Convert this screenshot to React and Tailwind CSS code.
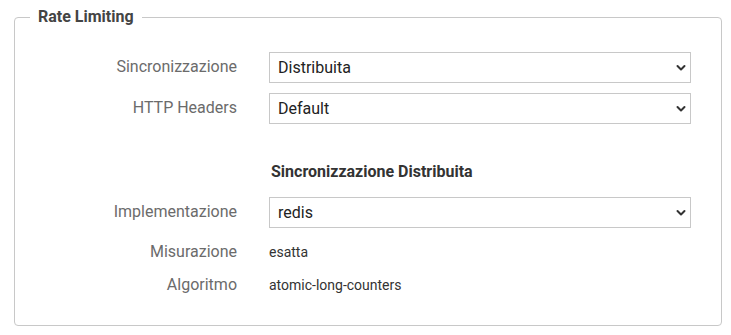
const font = { fontFamily: 'Roboto, "Liberation Sans", sans-serif' };

function Chevron() {
  return (
    <svg width="10" height="7" viewBox="0 0 10 7" className="absolute right-[4px] top-1/2 -translate-y-1/2 pointer-events-none">
      <path d="M1.5 1.5 L5 5 L8.5 1.5" fill="none" stroke="#333" strokeWidth="2" strokeLinecap="round" strokeLinejoin="round" />
    </svg>
  );
}

function SelectRow({ label, value, className = '' }) {
  return (
    <div className={`flex items-center h-[31px] ${className}`}>
      <div className="w-[207px] text-right text-[16px] text-[#6b6b6b] pb-[2px] leading-[31px]">{label}</div>
      <div className="relative ml-[32px] w-[422px] h-[31px] border border-[#c8c8c8] bg-white">
        <div className="pl-[8px] text-[16px] leading-[29px] text-[#222]">{value}</div>
        <Chevron />
      </div>
    </div>
  );
}

function TextRow({ label, value, className = '' }) {
  return (
    <div className={`flex items-baseline h-[24px] leading-[24px] ${className}`}>
      <div className="w-[207px] text-right text-[16px] text-[#6b6b6b]">{label}</div>
      <div className="ml-[32px] text-[14px] text-[#333]">{value}</div>
    </div>
  );
}

export default function App() {
  return (
    <div className="w-[731px] h-[335px] bg-white" style={font}>
      <div className="pt-[7px]">
        <fieldset className="ml-[14px] w-[708px] border border-[#c8c8c8] rounded-[4px] pl-[15px] pt-[25px] pb-[28px]">
          <legend className="px-[8px] text-[16px] leading-[20px] font-bold text-[#444]">Rate Limiting</legend>
          <SelectRow label="Sincronizzazione" value="Distribuita" />
          <SelectRow label="HTTP Headers" value="Default" className="mt-[10px]" />
          <div className="ml-[241px] mt-[38px] text-[16px] leading-[20px] font-bold text-[#333]">Sincronizzazione Distribuita</div>
          <SelectRow label="Implementazione" value="redis" className="mt-[15px]" />
          <TextRow label="Misurazione" value="esatta" className="mt-[12px]" />
          <TextRow label="Algoritmo" value="atomic-long-counters" className="mt-[9px]" />
        </fieldset>
      </div>
    </div>
  );
}
